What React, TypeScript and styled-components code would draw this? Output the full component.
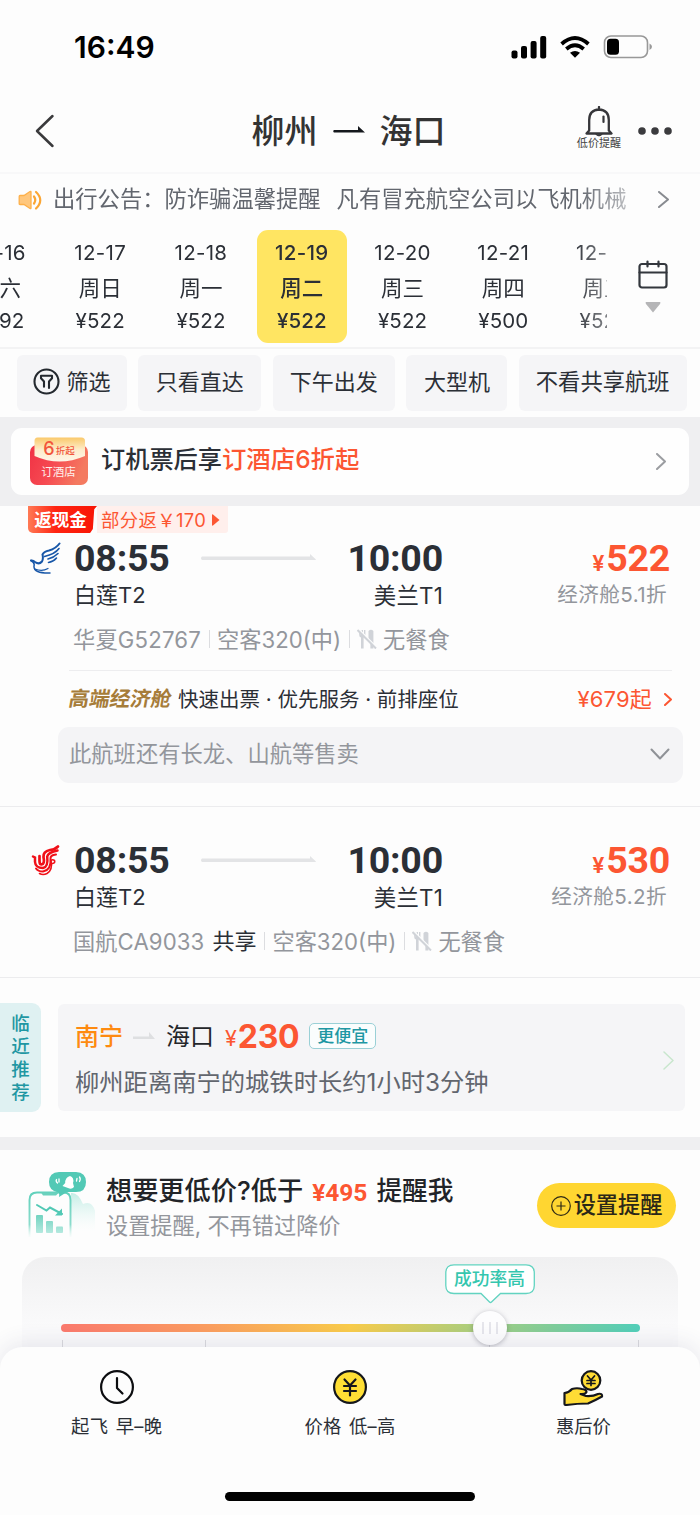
import React from 'react';
import styled, { createGlobalStyle } from 'styled-components';

const sans = `Inter, "Noto Sans CJK SC", sans-serif`;
const din = `Roboto, "Noto Sans CJK SC", sans-serif`;

const GlobalStyle = createGlobalStyle`
  * { box-sizing: border-box; }
  body { margin: 0; background: #fdfdfd; font-family: ${sans}; color: #24292f; }
  svg { display: block; flex: none; }
`;

const Page = styled.div`
  width: 700px;
  height: 1515px;
  overflow: hidden;
  display: flex;
  flex-direction: column;
  background: #fdfdfd;
`;

const Txt = styled.span<{ $size: number; $color?: string; $weight?: number; $ls?: number; $font?: string; $m?: string }>`
  font-family: ${(p) => p.$font || sans};
  font-size: ${(p) => p.$size}px;
  line-height: ${(p) => Math.round(p.$size * 1.2)}px;
  color: ${(p) => p.$color || '#2b2f36'};
  font-weight: ${(p) => p.$weight || 400};
  letter-spacing: ${(p) => p.$ls || 0}px;
  margin: ${(p) => p.$m || 0};
  white-space: pre;
  flex: none;
`;

/* status bar */
const StatusBar = styled.div`
  height: 94px;
  padding: 0 47px 0 74px;
  display: flex;
  align-items: center;
  justify-content: space-between;
  flex: none;
`;
const StatusIcons = styled.div`
  display: flex;
  align-items: center;
  gap: 13px;
`;

/* navigation */
const NavBar = styled.header`
  height: 80px;
  padding: 0 28px 4px 34px;
  display: grid;
  grid-template-columns: 95px 1fr 95px;
  align-items: center;
  border-bottom: 2px solid #f8f8f9;
  flex: none;
`;
const Route = styled.h1`
  margin: 0;
  padding-right: 9px;
  display: flex;
  align-items: center;
  justify-content: center;
  gap: 15px;
`;
const NavActions = styled.div`
  display: flex;
  align-items: center;
  justify-content: space-between;
`;
const PriceAlert = styled.div`
  width: 44px;
  margin-bottom: 6px;
  display: flex;
  flex-direction: column;
  align-items: center;
`;

/* announcement */
const Notice = styled.div`
  height: 50px;
  padding: 1px 31px 0 17px;
  display: flex;
  align-items: center;
  flex: none;
`;
const NoticeText = styled.div`
  width: 577px;
  margin-left: 9px;
  margin-top: -2px;
  overflow: hidden;
  display: flex;
  mask-image: linear-gradient(to right, #000 91%, rgba(0, 0, 0, 0.4) 100%);
`;
const Spacer = styled.div`
  flex: 1;
`;
const Gap = styled.div`
  height: 9px;
  flex: none;
`;

/* dates */
const Dates = styled.div`
  height: 125px;
  display: flex;
  border-bottom: 2px solid #f3f3f4;
  flex: none;
`;
const DateStrip = styled.div`
  width: 607px;
  overflow: hidden;
  display: flex;
  flex: none;
  padding-top: 6px;
  mask-image: linear-gradient(to right, #000 94%, rgba(0, 0, 0, 0.6) 100%);
`;
const DateCell = styled.div<{ $active?: boolean; $first?: boolean }>`
  width: 90px;
  height: 113px;
  margin: 0 5.4px;
  margin-left: ${(p) => (p.$first ? '-45.6px' : '5.4px')};
  padding-top: 11px;
  border-radius: 11px;
  background: ${(p) => (p.$active ? '#ffe562' : 'transparent')};
  flex: none;
  display: flex;
  flex-direction: column;
  align-items: center;
  span { height: 24px; line-height: 24px; }
  span:nth-child(2) { margin-top: 11px; }
  span:nth-child(3) { margin-top: 9px; }
`;
const CalendarButton = styled.div`
  width: 92px;
  padding-top: 36px;
  display: flex;
  flex-direction: column;
  align-items: center;
  gap: 13px;
`;

/* filters */
const Filters = styled.div`
  height: 68px;
  padding: 6px 0 0 17px;
  display: flex;
  gap: 11.3px;
  flex: none;
`;
const Chip = styled.div<{ $w: number }>`
  width: ${(p) => p.$w}px;
  height: 56px;
  padding-bottom: 3px;
  display: flex;
  align-items: center;
  justify-content: center;
  gap: 6px;
  border-radius: 6px;
  background: #f5f5f7;
  flex: none;
`;

/* hotel promo */
const PromoBand = styled.div`
  height: 89px;
  padding: 11px;
  background: #efeff1;
  flex: none;
`;
const PromoCard = styled.div`
  height: 67px;
  padding: 0 23px 0 18px;
  display: flex;
  align-items: center;
  border-radius: 11px;
  background: #fefefe;
`;
const PromoText = styled.div`
  margin-left: 13px;
  padding-bottom: 4px;
  display: flex;
`;
const Coupon = styled.div`
  width: 59px;
  height: 48px;
  margin-top: -1px;
  position: relative;
  svg { position: absolute; inset: 0; }
`;
const CouponLabels = styled.div`
  position: relative;
  display: flex;
  flex-direction: column;
  align-items: center;
  div { height: 23px; display: flex; align-items: center; }
`;

/* flights */
const Flight = styled.section<{ $h: number }>`
  height: ${(p) => p.$h}px;
  border-bottom: 1px solid #ececee;
  display: flex;
  flex-direction: column;
  flex: none;
`;
const Cashback = styled.div`
  height: 27px;
  margin-left: 28px;
  display: flex;
  align-items: center;
`;
const CashTag = styled.div`
  width: 69px;
  height: 27px;
  display: flex;
  align-items: center;
  justify-content: center;
  padding-right: 4px;
  border-radius: 0 0 0 5px;
  background: linear-gradient(90deg, #ff7a55, #ff2412 40%, #f81505);
  clip-path: polygon(0 0, 100% 0, 96% 12%, 94% 85%, 90% 100%, 0 100%);
`;
const CashText = styled.div`
  width: 131px;
  height: 27px;
  padding-left: 4px;
  display: flex;
  align-items: center;
  gap: 6px;
  background: #ffefec;
  border-radius: 0 0 3px 0;
`;
const Schedule = styled.div<{ $top: number }>`
  margin-top: ${(p) => p.$top}px;
  height: 81px;
  padding: 0 30px 0 30px;
  display: grid;
  grid-template-columns: 44px 126px 116px 127px 1fr;
`;
const Stop = styled.div<{ $end?: boolean }>`
  display: flex;
  flex-direction: column;
  align-items: ${(p) => (p.$end ? 'flex-end' : 'flex-start')};
  gap: 1px;
`;
const TimeBox = styled.div`
  height: 46px;
  padding-top: 1px;
  display: flex;
  align-items: center;
`;
const LogoBox = styled.div`
  padding-top: 7px;
`;
const LineBox = styled.div`
  padding-top: 17px;
`;
const PriceBox = styled.div`
  height: 46px;
  padding-top: 1px;
  display: flex;
  align-items: baseline;
  gap: 2px;
`;
const Info = styled.div`
  height: 28px;
  padding-left: 73px;
  display: flex;
  align-items: center;
`;
const Bar = styled.i`
  width: 1px;
  height: 18px;
  margin: 0 7px 0 8px;
  background: #dcdde0;
`;
const Premium = styled.div`
  height: 57px;
  margin: 17px 28px 0 69px;
  border-top: 1px solid #ededef;
  display: flex;
  align-items: center;
`;
const PremiumName = styled.span`
  width: 109px;
  font-family: ${sans};
  font-size: 20.5px;
  line-height: 24px;
  font-weight: 700;
  color: #a67c39;
  transform: skewX(-10deg);
  white-space: nowrap;
`;
const MoreSellers = styled.div`
  height: 56px;
  margin: 0 17px 0 58px;
  padding: 0 13px 3px 11px;
  display: flex;
  align-items: center;
  justify-content: space-between;
  border-radius: 11px;
  background: #f4f4f6;
`;

/* nearby */
const Nearby = styled.section`
  height: 159px;
  padding-top: 25px;
  display: flex;
  gap: 17px;
  flex: none;
`;
const SideTab = styled.div`
  width: 41px;
  height: 109px;
  padding-top: 9px;
  display: flex;
  flex-direction: column;
  align-items: center;
  border-radius: 0 9px 9px 0;
  background: #dff1f2;
  span { height: 23px; line-height: 23px; }
`;
const NearbyCard = styled.div`
  width: 627px;
  height: 107px;
  margin-top: 1px;
  padding: 0 11px 0 17px;
  display: flex;
  align-items: center;
  justify-content: space-between;
  border-radius: 6px;
  background: #f5f5f7;
`;
const NearbyArrow = styled.svg`
  margin: 0 11px 0 10px;
`;
const CardChevron = styled.div`
  padding-top: 6px;
`;
const NearbyLines = styled.div`
  height: 107px;
  padding-top: 12px;
`;
const NearbyRoute = styled.div`
  height: 40px;
  display: flex;
  align-items: center;
  margin-bottom: 12px;
`;
const Cheaper = styled.div`
  width: 67px;
  height: 26px;
  margin-left: 10px;
  display: flex;
  align-items: center;
  justify-content: center;
  border: 1.5px solid #9ad0d6;
  border-radius: 5px;
  background: #fafdfd;
`;
const Divider = styled.div`
  height: 13px;
  background: #efeff1;
  flex: none;
`;

/* price alert */
const AlertHead = styled.section`
  height: 107px;
  padding: 0 24px 0 28px;
  display: flex;
  flex: none;
`;
const AlertText = styled.div`
  margin-left: 8px;
  padding-top: 24px;
  display: flex;
  flex-direction: column;
  gap: 6px;
`;
const AlertTitle = styled.div`
  height: 32px;
  display: flex;
  align-items: center;
`;
const AlertIcon = styled.div`
  padding-top: 21px;
  width: 70px;
`;
const AlertButton = styled.div`
  width: 139px;
  height: 45px;
  margin-top: 33px;
  display: flex;
  align-items: center;
  justify-content: center;
  gap: 3px;
  border-radius: 23px;
  background: #ffd631;
`;
const SliderPanel = styled.div`
  height: 110px;
  margin: 0 22px;
  padding: 67px 38px 0 39px;
  border-radius: 23px 23px 0 0;
  background: linear-gradient(#f0f0f1, #fafafb 70px);
  flex: none;
`;
const Track = styled.div`
  height: 8px;
  border-radius: 4px;
  position: relative;
  background: linear-gradient(90deg, #fb7a6e, #fb9d60 25%, #f9cc4b 50%, #a9cf80 72%, #7fcd9b 85%, #52cfba);
`;
const Thumb = styled.div`
  position: absolute;
  left: 411.5px;
  top: -13px;
  width: 34px;
  height: 34px;
  display: flex;
  align-items: center;
  justify-content: center;
  gap: 5px;
  border-radius: 50%;
  background: #fdfdfe;
  box-shadow: 0 1px 5px rgba(60, 60, 80, 0.35);
  i { width: 2px; height: 12px; background: #e6e6ec; }
`;
const Bubble = styled.div`
  position: absolute;
  left: 383.5px;
  top: -60px;
  width: 90px;
  height: 40px;
  svg { position: absolute; inset: 0; }
  span { position: relative; display: block; text-align: center; margin-top: 4px; }
`;
const Ticks = styled.div`
  height: 16px;
  margin: 8px 1px 0;
  display: grid;
  grid-template-columns: 143px 284px 149px 1px;
  i { width: 1px; height: 16px; background: #dadade; }
`;

/* sort tabs */
const SortSheet = styled.footer`
  height: 168px;
  margin-top: -20px;
  position: relative;
  padding-top: 23px;
  border-radius: 22px 22px 0 0;
  background: #fdfdfd;
  box-shadow: 0 -4px 22px rgba(60, 60, 110, 0.11);
  flex: none;
`;
const SortTabs = styled.div`
  display: grid;
  grid-template-columns: repeat(3, 1fr);
`;
const SortTab = styled.div`
  height: 67px;
  display: flex;
  flex-direction: column;
  align-items: center;
  justify-content: space-between;
  word-spacing: 2px;
`;
const HomeBar = styled.div`
  width: 250px;
  height: 9px;
  margin: 55px auto 0;
  border-radius: 5px;
  background: #000;
`;

const Chevron = ({ w, h, color, sw = 2 }: { w: number; h: number; color: string; sw?: number }) => (
  <svg width={w} height={h} viewBox={`0 0 ${w} ${h}`} fill="none" stroke={color} strokeWidth={sw} strokeLinecap="round" strokeLinejoin="round">
    <path d={`M1 1L${w - 1} ${h / 2}L1 ${h - 1}`} />
  </svg>
);

const CutleryIcon = styled.svg`
  margin-right: 6px;
`;
const Cutlery = () => (
  <CutleryIcon width="20" height="20" viewBox="0 0 20 20">
    <path d="M2.200 1V6Q2.200 8 4 8.500V19.500H6.600V8.500Q8.400 8 8.400 6V1H7V5.500H6V1H4.600V5.500H3.600V1Z" fill="#d0d3d8" />
    <path d="M11.500 2Q14 -.5 16.400 2V19.500H13.400V13H11.500Z" fill="#d0d3d8" />
    <path d="M2 .5L20 18.500" stroke="#fdfdfd" strokeWidth="1.500" />
    <path d="M.5 1L19 19.500" stroke="#d0d3d8" strokeWidth="2" />
  </CutleryIcon>
);

const BirdLogo = () => (
  <svg width="31" height="33" viewBox="0 0 31 33" fill="none" stroke="#1857a8" strokeLinecap="round">
    <path d="M1 18.500Q3 18 5 20Q9 23 12 19.500Q13.500 17 12.500 12.500Q14 9.500 19 8.500Q26 6.500 29.500 1.500" strokeWidth="2" />
    <path d="M1 18.500Q5 21 4 24Q3.500 31.500 20 31" strokeWidth="1.500" />
    <path d="M5 27Q12 30 18 26.500" strokeWidth="1.200" />
    <path d="M14.500 14.500Q25 12 29 6.500M18 17Q24 15.500 28 11.500M18.500 20.500Q23 20 26.500 16" strokeWidth="1.600" />
  </svg>
);

const PhoenixLogo = () => (
  <svg width="31" height="33" viewBox="0 0 31 33" fill="none" stroke="#f01018" strokeLinecap="round">
    <path d="M28 2.500Q25 5.500 20 6Q13 7.500 13.500 13Q15 20 11.500 20.500Q9.500 20.500 9.500 17V12" strokeWidth="2.700" />
    <path d="M27.500 6.500Q18 8.500 17.200 12.500Q18.500 23 13 24Q5.500 24 5 18V13.500L3 12.500" strokeWidth="2.500" />
    <path d="M26 10.500Q20 11 20.500 15Q21.500 26 13 27.500Q8 27.500 6 24.500" strokeWidth="2" />
    <path d="M22.500 19.500Q25.500 19 24.500 16.500Q22.500 15 21 16.500Q23 26 17 29.500Q13 31.500 9.500 29.500" strokeWidth="1.600" />
  </svg>
);

const RouteLine = () => (
  <svg width="116" height="10" viewBox="0 0 116 10">
    <path d="M2 5.500H110V3L116 8.500Q116 9 114 9H2Q0 7.200 2 5.500Z" fill="#e3e4e6" transform="translate(0 -1)" />
  </svg>
);

const dates = [
  ['12-16', '周六', '¥492'],
  ['12-17', '周日', '¥522'],
  ['12-18', '周一', '¥522'],
  ['12-19', '周二', '¥522'],
  ['12-20', '周三', '¥522'],
  ['12-21', '周四', '¥500'],
  ['12-22', '周五', '¥522'],
];

const GREY = '#93969c';
const RED = '#fc5632';

function FlightTimes({ top, logo, price, discount }: { top: number; logo: React.ReactNode; price: string; discount: string }) {
  return (
    <Schedule $top={top}>
      <LogoBox>{logo}</LogoBox>
      <Stop>
        <TimeBox><Txt $size={37.5} $weight={700} $font={din} $ls={-0.2}>08:55</Txt></TimeBox>
        <Txt $size={22}>白莲T2</Txt>
      </Stop>
      <LineBox><RouteLine /></LineBox>
      <Stop $end>
        <TimeBox><Txt $size={37.5} $weight={700} $font={din} $ls={-0.2}>10:00</Txt></TimeBox>
        <Txt $size={22.4} $ls={0.2}>美兰T1</Txt>
      </Stop>
      <Stop $end>
        <PriceBox>
          <Txt $size={22} $weight={600} $color={RED} $font={din}>¥</Txt>
          <Txt $size={37.5} $weight={700} $color={RED} $font={din} $ls={-0.3}>{price}</Txt>
        </PriceBox>
        <Txt $size={20.6} $ls={0.4} $color={GREY} $m="0 3px 0 0">{discount}</Txt>
      </Stop>
    </Schedule>
  );
}

export default function App() {
  return (
    <Page>
      <GlobalStyle />
      <StatusBar>
        <Txt $size={30} $weight={600} $color="#000">16:49</Txt>
        <StatusIcons>
          <svg width="36" height="23" viewBox="0 0 36 23">
            <rect x="0.500" y="14.500" width="6" height="8" rx="2" />
            <rect x="10" y="10" width="6" height="12.500" rx="2" />
            <rect x="19.600" y="5" width="6" height="17.500" rx="2" />
            <rect x="29.200" y="0" width="6" height="22.500" rx="2" />
          </svg>
          <svg width="30" height="22" viewBox="0 0 30 22" fill="none" stroke="#000" strokeWidth="3.800">
            <path d="M1.600 8Q15 -4 28.400 8" />
            <path d="M6.300 13Q15 5.500 23.700 13" />
            <path d="M15 21.800L10 16.800Q15 13 20 16.800Z" fill="#000" stroke="none" />
          </svg>
          <svg width="50" height="24" viewBox="0 0 50 24">
            <rect x="1.500" y="1" width="43" height="21.500" rx="6.500" fill="none" stroke="#989898" strokeWidth="1.600" />
            <rect x="4" y="3.800" width="12" height="16" rx="3.500" />
            <path d="M46.500 8.500Q49 10 49 11.800Q49 13.500 46.500 15Z" fill="#999" />
          </svg>
        </StatusIcons>
      </StatusBar>

      <NavBar>
        <svg width="22" height="34" viewBox="0 0 22 34" fill="none" stroke="#3a3a3c" strokeWidth="2.500" strokeLinecap="round" strokeLinejoin="round">
          <path d="M18.500 2L3 17L18.500 32" />
        </svg>
        <Route>
          <Txt $size={33} $weight={500} $color="#333">柳州</Txt>
          <svg width="32" height="10" viewBox="0 0 32 10"><path d="M1 4H25V0L32 6.500H1Q-.5 5.200 1 4Z" fill="#15181d" /></svg>
          <Txt $size={33} $weight={500} $color="#333">海口</Txt>
        </Route>
        <NavActions>
          <PriceAlert>
            <svg width="28" height="31" viewBox="0 0 28 31" fill="none" stroke="#36363a" strokeWidth="2.300" strokeLinejoin="round" strokeLinecap="round">
              <path d="M14 1V3M4.200 24.500V14Q4.200 4 14 3.500Q23.800 4 23.800 14V24.500L26.500 27.500H1.500Z" />
              <path d="M18.500 10.500V16" strokeWidth="2.200" />
              <path d="M11 28.500Q14 31.500 17 28.500Z" fill="#36363a" strokeWidth="1" />
            </svg>
            <Txt $size={11.1} $color="#444">低价提醒</Txt>
          </PriceAlert>
          <svg width="34" height="8" viewBox="0 0 34 8" fill="#3b3b3e">
            <circle cx="4" cy="4" r="3.800" /><circle cx="17" cy="4" r="3.800" /><circle cx="30" cy="4" r="3.800" />
          </svg>
        </NavActions>
      </NavBar>

      <Notice>
        <svg width="27" height="22" viewBox="0 0 27 22">
          <path d="M3 6.500H7L13 2.500Q14 2 14 3V19Q14 20 13 19.500L7 15.500H3Q2.200 15.500 2.200 14.500V7.500Q2.200 6.500 3 6.500Z" fill="#ffc77d" stroke="#fdb04a" strokeWidth="1.300" />
          <path d="M17 7.500Q19.500 11 17 14.500M19 3Q27.500 11 19 19.500" fill="none" stroke="#fba634" strokeWidth="2.200" strokeLinecap="round" />
        </svg>
        <NoticeText>
          <Txt $size={22.3} $color="#62666e">出行公告：防诈骗温馨提醒</Txt>
          <Txt $size={22.3} $color="#62666e" $m="0 0 0 16px">凡有冒充航空公司以飞机机械</Txt>
        </NoticeText>
        <Spacer />
        <Chevron w={11} h={17} color="#888b90" />
      </Notice>

      <Dates>
        <DateStrip>
          {dates.map(([d, w, p], i) => {
            const weight = i === 3 ? 500 : 400;
            return (
              <DateCell key={d} $active={i === 3} $first={i === 0}>
                <Txt $size={20.5} $weight={weight} $ls={0.3}>{d}</Txt>
                <Txt $size={21.5} $weight={weight}>{w}</Txt>
                <Txt $size={20.5} $weight={weight} $ls={0.1}>{p}</Txt>
              </DateCell>
            );
          })}
        </DateStrip>
        <CalendarButton>
          <svg width="30" height="29" viewBox="0 0 30 29" fill="none" stroke="#33373d" strokeWidth="2.200" strokeLinecap="round">
            <rect x="1.500" y="4" width="27" height="23.500" rx="2.500" />
            <path d="M1.500 12.500H28.500M9.500 1.500V6.500M20.500 1.500V6.500" />
          </svg>
          <svg width="16" height="11" viewBox="0 0 16 11"><path d="M1 0H15Q16 .5 15 2L8 10.500L1 2Q0 .5 1 0Z" fill="#b5b5b7" /></svg>
        </CalendarButton>
      </Dates>

      <Filters>
        <Chip $w={110}>
          <svg width="27" height="27" viewBox="0 0 27 27" fill="none" stroke="#24292f" strokeWidth="2.100" strokeLinejoin="round" strokeLinecap="round">
            <circle cx="13.500" cy="13.500" r="12" />
            <path d="M11 18.800V13.500L8 10.200V7.800H19V10.200L16 13.500V20" />
          </svg>
          <Txt $size={22}>筛选</Txt>
        </Chip>
        <Chip $w={123}><Txt $size={22}>只看直达</Txt></Chip>
        <Chip $w={122.5}><Txt $size={22}>下午出发</Txt></Chip>
        <Chip $w={101}><Txt $size={22}>大型机</Txt></Chip>
        <Chip $w={168}><Txt $size={22.3}>不看共享航班</Txt></Chip>
      </Filters>

      <PromoBand>
        <PromoCard>
          <Coupon>
            <svg width="59" height="48" viewBox="0 0 59 48">
              <defs>
                <linearGradient id="cpRed" x1="0" y1="0" x2="1" y2="0.3">
                  <stop offset="0" stopColor="#f03244" /><stop offset=".5" stopColor="#f64a52" /><stop offset="1" stopColor="#f47a60" />
                </linearGradient>
                <linearGradient id="cpGold" x1="0" y1="0" x2="0" y2="1">
                  <stop offset="0" stopColor="#fac96a" /><stop offset=".5" stopColor="#fdecca" /><stop offset="1" stopColor="#fff5e8" />
                </linearGradient>
              </defs>
              <rect x="1" y="8" width="58" height="40" rx="7" fill="url(#cpRed)" />
              <path d="M5.500 4Q5.500 .5 8.500 .5H52.500Q56 .5 56 4V19Q30.500 30 5.500 19Z" fill="url(#cpGold)" />
            </svg>
            <CouponLabels>
              <div>
                <Txt $size={18} $weight={500} $color="#f2553c" $m="0 1px 0 1px">6</Txt>
                <Txt $size={9.5} $weight={500} $color="#f2553c" $m="3px 0 0 0">折起</Txt>
              </div>
              <div><Txt $size={11.500} $color="#fff1ec">订酒店</Txt></div>
            </CouponLabels>
          </Coupon>
          <PromoText>
            <Txt $size={24.2} $weight={500}>订机票后享</Txt>
            <Txt $size={24.4} $weight={500} $color={RED}>订酒店6折起</Txt>
          </PromoText>
          <Spacer />
          <Chevron w={10} h={17} color="#9b9da1" />
        </PromoCard>
      </PromoBand>

      <Flight $h={301}>
        <Cashback>
          <CashTag><Txt $size={17.5} $weight={700} $color="#fff">返现金</Txt></CashTag>
          <CashText>
            <Txt $size={18.4} $ls={0.35} $color={RED}>部分返￥170</Txt>
            <svg width="8" height="12" viewBox="0 0 8 12"><path d="M0 1Q0 0 1 .5L7.500 6L1 11.500Q0 12 0 11Z" fill={RED} /></svg>
          </CashText>
        </Cashback>
        <FlightTimes top={2} logo={<BirdLogo />} price="522" discount="经济舱5.1折" />
        <Gap />
        <Info>
          <Txt $size={22.2} $ls={0.2} $color={GREY}>华夏G52767</Txt><Bar />
          <Txt $size={22.2} $color={GREY}>空客320(中)</Txt><Bar />
          <Cutlery /><Txt $size={22.2} $color={GREY}>无餐食</Txt>
        </Info>
        <Premium>
          <PremiumName>高端经济舱</PremiumName>
          <Txt $size={20.500}>快速出票 · 优先服务 · 前排座位</Txt>
          <Spacer />
          <Txt $size={22} $ls={0.2} $color={RED} $m="0 12px 0 0">¥679起</Txt>
          <Chevron w={8} h={13} color={RED} />
        </Premium>
        <MoreSellers>
          <Txt $size={22.3} $color={GREY}>此航班还有长龙、山航等售卖</Txt>
          <svg width="20" height="12" viewBox="0 0 20 12" fill="none" stroke="#8f9297" strokeWidth="2" strokeLinecap="round" strokeLinejoin="round"><path d="M1.500 1.500L10 10.500L18.500 1.500" /></svg>
        </MoreSellers>
      </Flight>

      <Flight $h={171}>
        <FlightTimes top={30} logo={<PhoenixLogo />} price="530" discount="经济舱5.2折" />
        <Gap />
        <Info>
          <Txt $size={22.2} $ls={0.1} $color={GREY}>国航CA9033</Txt>
          <Txt $size={22} $m="0 0 0 8px">共享</Txt><Bar />
          <Txt $size={22.2} $color={GREY}>空客320(中)</Txt><Bar />
          <Cutlery /><Txt $size={22.2} $color={GREY}>无餐食</Txt>
        </Info>
      </Flight>

      <Nearby>
        <SideTab>
          {['临', '近', '推', '荐'].map((c) => <Txt key={c} $size={18.5} $weight={500} $color="#1f97a3">{c}</Txt>)}
        </SideTab>
        <NearbyCard>
          <NearbyLines>
            <NearbyRoute>
              <Txt $size={24} $weight={500} $color="#fe8a10">南宁</Txt>
              <NearbyArrow width="22" height="8" viewBox="0 0 22 8"><path d="M0 4.500H16V0L22 7H0Z" fill="#dedfe1" /></NearbyArrow>
              <Txt $size={24} $color="#24262a">海口</Txt>
              <Txt $size={21.5} $color={RED} $m="4px 1px 0 11px">¥</Txt>
              <Txt $size={32} $weight={700} $ls={-0.3} $color={RED} $m="2px 0 0 0">230</Txt>
              <Cheaper><Txt $size={17} $weight={500} $color="#1f97a3">更便宜</Txt></Cheaper>
            </NearbyRoute>
            <Txt $size={24.3} $color="#62666e">柳州距离南宁的城铁时长约1小时3分钟</Txt>
          </NearbyLines>
          <CardChevron><Chevron w={11} h={19} color="#c8e6cd" sw={1.5} /></CardChevron>
        </NearbyCard>
      </Nearby>

      <Divider />

      <AlertHead>
        <AlertIcon>
          <svg width="68" height="70" viewBox="0 0 68 70" fill="none">
            <defs>
              <linearGradient id="fadeDown" x1="0" y1="20" x2="0" y2="68" gradientUnits="userSpaceOnUse">
                <stop offset="0" stopColor="#5fd0bb" /><stop offset=".7" stopColor="#8bdccc" /><stop offset="1" stopColor="#dff6f1" stopOpacity="0" />
              </linearGradient>
              <linearGradient id="fadeHill" x1="0" y1="22" x2="0" y2="60" gradientUnits="userSpaceOnUse">
                <stop offset="0" stopColor="#c3ede5" /><stop offset="1" stopColor="#eefaf8" stopOpacity="0" />
              </linearGradient>
              <linearGradient id="barFade" x1="0" y1="42" x2="0" y2="62" gradientUnits="userSpaceOnUse">
                <stop offset="0" stopColor="#6bd1bd" /><stop offset="1" stopColor="#b5e9df" />
              </linearGradient>
            </defs>
            <path d="M43 22Q50 21 55 33Q64 29 67 40V62H43Z" fill="url(#fadeHill)" />
            <path d="M1.500 66V29Q1.500 21.500 9 21.500H36Q42.500 21.500 42.500 29V66" stroke="url(#fadeDown)" strokeWidth="1.900" />
            <path d="M13 21.500L15 24.500H28L31 21.500Z" fill="#6bd1bd" />
            <path d="M31 1H48Q58 1.500 58 11Q58 21 48 21H39L31 26Q32 21 29 21Q21 19 21 11Q21 1.500 31 1Z" fill="#52c9b5" />
            <path d="M42 5Q46.500 6.500 45 12L46 16Q43.500 19 40 17L34.500 15L37.200 12Q37 6.500 42 5Z" fill="#fff" />
            <path d="M28.500 8.500Q27.500 10 29.500 12M31 8V11M49 7.500L48.500 10M51.500 6Q53 8 51.500 10.500" stroke="#fff" strokeWidth="1.300" strokeLinecap="round" />
            <path d="M9 34L18.500 39.500L22 36.500L34 43" stroke="#52c9b5" strokeWidth="2" strokeLinecap="round" />
            <path d="M34 37.500V44.500H27Z" fill="#52c9b5" />
            <rect x="8" y="44" width="7" height="18" rx="1" fill="url(#barFade)" />
            <rect x="18" y="50" width="7" height="12" rx="1" fill="url(#barFade)" />
            <rect x="28" y="55.500" width="7" height="6.500" rx="1" fill="url(#barFade)" />
          </svg>
        </AlertIcon>
        <AlertText>
          <AlertTitle>
            <Txt $size={26.2} $weight={500} $color="#222428">想要更低价?低于</Txt>
            <Txt $size={24.5} $weight={700} $color={RED} $font={din} $m="4px 9px 0 9px">¥495</Txt>
            <Txt $size={25.7} $weight={500} $color="#222428">提醒我</Txt>
          </AlertTitle>
          <Txt $size={22.2} $color={GREY}>设置提醒, 不再错过降价</Txt>
        </AlertText>
        <Spacer />
        <AlertButton>
          <svg width="20" height="20" viewBox="0 0 20 20" fill="none" stroke="#2f2a14" strokeWidth="1.200">
            <circle cx="10" cy="10" r="9.300" /><path d="M10 5.500V14.500M5.500 10H14.500" />
          </svg>
          <Txt $size={22.2} $weight={500} $color="#2b2718" $m="-2px 0 0 0">设置提醒</Txt>
        </AlertButton>
      </AlertHead>

      <SliderPanel>
        <Track>
          <Bubble>
            <svg width="90" height="40" viewBox="0 0 90 40">
              <path d="M9 .8H81Q89.300 .8 89.300 9V21.500Q89.300 29.500 81 29.500H55.500L46.500 38Q45.500 39 44.500 38L36 29.500H9Q.8 29.500 .8 21.500V9Q.8 .8 9 .8Z" fill="#fff" stroke="#62d3c0" strokeWidth="1.300" />
            </svg>
            <Txt $size={17.7} $weight={500} $color="#35c6ae">成功率高</Txt>
          </Bubble>
          <Thumb><i /><i /><i /></Thumb>
        </Track>
        <Ticks><i /><i /><i /><i /></Ticks>
      </SliderPanel>

      <SortSheet>
        <SortTabs>
          <SortTab>
            <svg width="34" height="34" viewBox="0 0 34 34" fill="none" stroke="#0c0d10" strokeWidth="2.200" strokeLinecap="round" strokeLinejoin="round">
              <circle cx="17" cy="17" r="15.900" /><path d="M17 8V18L22.500 23.500" />
            </svg>
            <Txt $size={18.3} $ls={0.3}>起飞 早–晚</Txt>
          </SortTab>
          <SortTab>
            <svg width="34" height="34" viewBox="0 0 34 34" fill="none" stroke="#15171c" strokeWidth="2.200" strokeLinecap="round" strokeLinejoin="round">
              <circle cx="17" cy="17" r="15.900" fill="#ffdf35" />
              <path d="M11.500 9.500L17 15.500L22.500 9.500M17 15.500V25.500M11 16H23M11 21H23" />
            </svg>
            <Txt $size={18.3} $ls={0.3}>价格 低–高</Txt>
          </SortTab>
          <SortTab>
            <svg width="42" height="36" viewBox="0 0 42 36" fill="#ffdc35" stroke="#15171c" strokeWidth="2.200" strokeLinecap="round" strokeLinejoin="round">
              <circle cx="29" cy="10.500" r="9.300" />
              <path d="M25.500 6L29 10L32.500 6M29 10V15.500M25 10.500H33M25 13.500H33" strokeWidth="1.700" />
              <path d="M2.500 23Q7 22.500 10 19Q15 17.500 20 19Q24.500 19.500 24.500 22Q23 24.500 18.500 24L24 26Q31 26.500 36 24Q40.500 23 40 26.500Q33 30.500 26 33.500Q15 33.500 4 35Q2.500 35 2.500 34Z" />
            </svg>
            <Txt $size={18.3}>惠后价</Txt>
          </SortTab>
        </SortTabs>
        <HomeBar />
      </SortSheet>
    </Page>
  );
}
